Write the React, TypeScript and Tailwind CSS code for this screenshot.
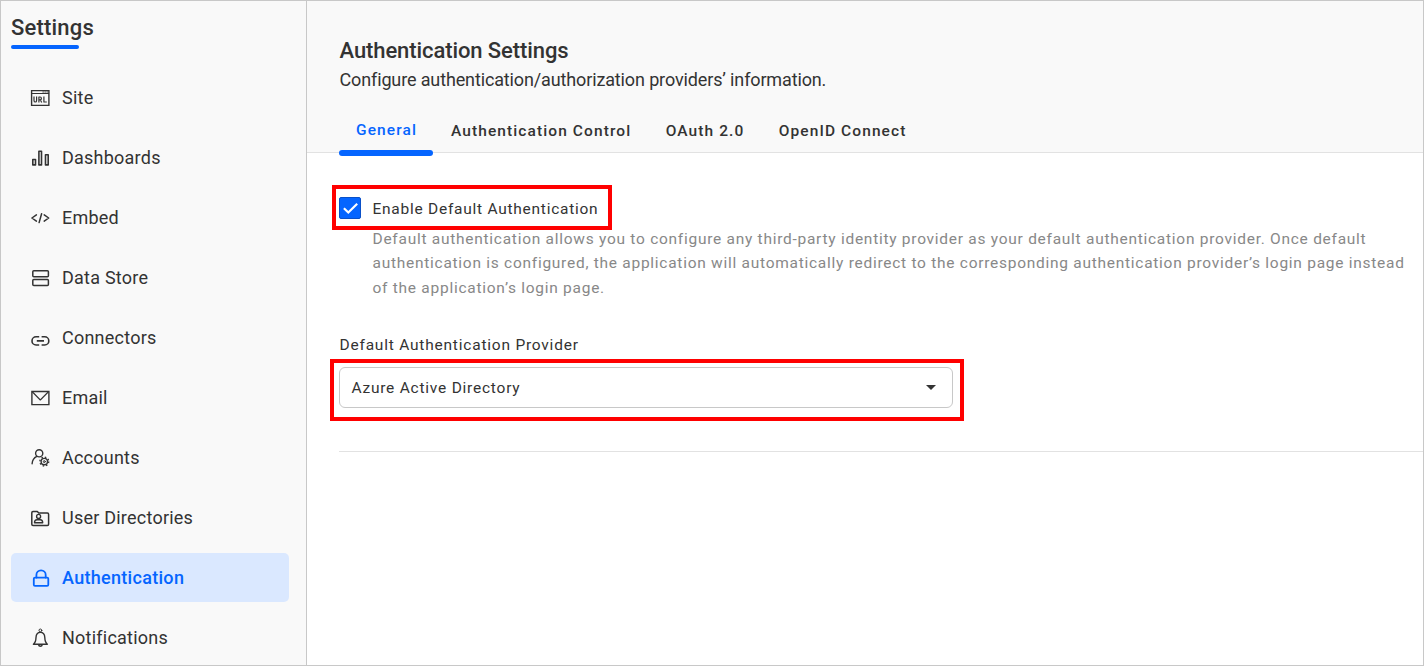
import React from "react";

type IconProps = { children: React.ReactNode };

const Icon = ({ children }: IconProps) => (
  <svg
    className="mt-px h-5 w-5 shrink-0"
    viewBox="0 0 20 20"
    fill="none"
    stroke="currentColor"
    strokeWidth="1.4"
    strokeLinecap="round"
    strokeLinejoin="round"
  >
    {children}
  </svg>
);

const items: { label: string; icon: React.ReactNode; active?: boolean }[] = [
  {
    label: "Site",
    icon: (
      <Icon>
        <path strokeLinejoin="miter" d="M1.6 2.6h17.3v14.8H1.6z" />
        <path strokeWidth="1" strokeLinecap="butt" d="M1.6 5.5h17.5" />
        <path strokeWidth="1.4" strokeLinecap="butt" d="M12.5 4h1.3M14.5 4h1.3M16.5 4h1.3" opacity=".7" />
        <path
          strokeWidth="1.2"
          strokeLinecap="butt"
          d="M4 8.4v4q0 1.6 1.3 1.6t1.3-1.6v-4M8.9 14.6V9h1.2q1.3 0 1.3 1.4t-1.3 1.4H9M10.3 11.8l1.4 2.7M13.9 8.4V14h2.9"
        />
      </Icon>
    ),
  },
  {
    label: "Dashboards",
    icon: (
      <Icon>
        <path strokeWidth="1.6" d="M2.8 11.5h2.7v5.4H2.8zM8.9 3.2h2.6v13.7H8.9zM15.5 6.8h2.7v10.1h-2.7z" />
      </Icon>
    ),
  },
  {
    label: "Embed",
    icon: (
      <Icon>
        <path strokeWidth="1.5" d="M6.4 6.9L1.9 10l4.5 3.1M14.2 6.9l4.5 3.1-4.5 3.1M11.6 5.8L9.1 14.6" />
      </Icon>
    ),
  },
  {
    label: "Data Store",
    icon: (
      <Icon>
        <rect strokeWidth="1.5" x="2.8" y="2.7" width="15.6" height="6" rx="1" />
        <rect strokeWidth="1.5" x="2.8" y="11.6" width="15.6" height="6" rx="1" />
      </Icon>
    ),
  },
  {
    label: "Connectors",
    icon: (
      <Icon>
        <path
          strokeWidth="1.6"
          strokeLinecap="butt"
          d="M9.2 8.8H6.1a4.1 4.1 0 0 0 0 8.2h3.1M11.6 8.8h3.1a4.1 4.1 0 0 1 0 8.2h-3.1M6.8 12.9h7.2"
        />
      </Icon>
    ),
  },
  {
    label: "Email",
    icon: (
      <Icon>
        <path strokeLinejoin="miter" d="M1.9 3.5h17v13.1h-17z" />
        <path strokeWidth="1.1" d="M2.5 4l7.8 8L18.2 4" />
      </Icon>
    ),
  },
  {
    label: "Accounts",
    icon: (
      <Icon>
        <circle cx="9.2" cy="5.3" r="3.6" />
        <path d="M2.1 15.8c.2-3.7 1.8-6.1 4.7-7.5" />
        <circle cx="14.3" cy="13.6" r="3.2" strokeWidth="1.4" />
        <circle cx="14.3" cy="13.6" r="1" strokeWidth="1" />
        <circle
          cx="14.3"
          cy="13.6"
          r="4.4"
          strokeWidth="1.4"
          strokeLinecap="butt"
          strokeDasharray="1.5 1.96"
        />
      </Icon>
    ),
  },
  {
    label: "User Directories",
    icon: (
      <Icon>
        <path strokeWidth="1.5" d="M3 3.5h4.3l1.5 1.6h8.6q1.2 0 1.2 1.2v10q0 1.2-1.2 1.2H3q-1.2 0-1.2-1.2V4.7q0-1.2 1.2-1.2z" />
        <circle cx="8.6" cy="8.4" r="2" />
        <path d="M4.5 14.8c0-2.3 1.2-3.1 2.5-3.1h3.2c1.3 0 2.5.8 2.5 3.1z" />
      </Icon>
    ),
  },
  {
    label: "Authentication",
    active: true,
    icon: (
      <Icon>
        <rect strokeWidth="1.8" x="3.8" y="9.6" width="14.5" height="8.3" rx="1.2" />
        <path strokeWidth="1.8" d="M6.4 9.6V7a4.65 4.65 0 0 1 9.3 0v2.6" />
      </Icon>
    ),
  },
  {
    label: "Notifications",
    icon: (
      <Icon>
        <circle cx="10.4" cy="2.4" r="1.4" strokeWidth="1" />
        <path d="M3.4 16.2c2-1.4 2.5-3.2 2.6-6.6.1-3.2 1.8-5.2 4.4-5.2s4.3 2 4.4 5.2c.1 3.4.6 5.2 2.6 6.6z" />
        <path strokeWidth="1.6" d="M8.7 16.8c.3 1.9 3.1 1.9 3.4 0" />
      </Icon>
    ),
  },
];

const tabs = ["Authentication Control", "OAuth 2.0", "OpenID Connect"];

export default function App() {
  return (
    <div className="flex h-[666px] w-[1424px] overflow-hidden border border-[#c8c8c8] bg-white font-['Roboto',sans-serif] text-[#333333]">
      <aside className="w-[306px] shrink-0 border-r border-[#c8c8c8] bg-[#f9f9f9] pl-[10px] pr-[17px]">
        <h1 className="mt-[12px] h-8 text-[22px] font-medium leading-[29px] tracking-[0.2px]">Settings</h1>
        <div className="h-1 w-[68px] rounded-[2px] bg-[#0565ff]" />
        <nav className="mt-[24px] flex flex-col gap-[11px]">
          {items.map((it) => (
            <a
              key={it.label}
              className={
                it.active
                  ? "flex h-[49px] items-center gap-3 rounded-[5px] bg-[#dae8ff] pl-[19px] text-[18px] font-medium tracking-[0.3px] text-[#0565ff]"
                  : "flex h-[49px] items-center gap-3 pl-[19px] text-[18px] tracking-[0.23px]"
              }
            >
              {it.icon}
              <span>{it.label}</span>
            </a>
          ))}
        </nav>
      </aside>

      <main className="min-w-0 flex-1">
        <header className="h-[152px] border-b border-[#e2e2e2] bg-[#f9f9f9] pl-8 pt-[35px]">
          <h2 className="pl-[0.5px] text-[22px] font-medium leading-[30px] tracking-[-0.09px]">Authentication Settings</h2>
          <p className="pl-[0.5px] text-[18px] leading-7 tracking-[-0.133px]">
            Configure authentication/authorization providers’ information.
          </p>
          <div className="mt-4 flex h-[46px] text-[15.49px] font-medium tracking-[1.1px]">
            <div className="flex h-[46px] w-[94px] shrink-0 flex-col justify-between text-[#0565ff]">
              <span className="pl-[17px] pt-2 leading-6">General</span>
              <span className="h-[6px] rounded-[3px] bg-[#0565ff]" />
            </div>
            <div className="flex gap-[34.4px] pl-[18px] pt-[9px] leading-6">
              {tabs.map((t) => (
                <span key={t}>{t}</span>
              ))}
            </div>
          </div>
        </header>

        <section className="pt-8">
          <div className="ml-[25px] flex h-[45px] w-[280px] items-center border-4 border-[#ff0000] pl-[3px]">
            <span className="flex h-[22px] w-[22px] shrink-0 items-center justify-center rounded-[2px] border border-[#0a50c8] bg-[#0565ff]">
              <svg className="h-5 w-5" viewBox="0 0 20 20" fill="none" stroke="white" strokeWidth="2.2">
                <path d="M3.9 10.2l4.4 4.3 8.9-8.8" />
              </svg>
            </span>
            <span className="whitespace-nowrap pl-[11.5px] pt-[3px] text-[15.49px] leading-6 tracking-[0.75px]">Enable Default Authentication</span>
          </div>
          <p className="-mt-[3px] ml-[65.5px] h-[73px] whitespace-nowrap text-[15.49px] leading-[24.3px] tracking-[0.737px] text-[#888888]">
            Default authentication allows you to configure any third-party identity provider as your default authentication provider. Once default
            <br />
            authentication is configured, the application will automatically redirect to the corresponding authentication provider’s login page instead
            <br />
            of the application’s login page.
          </p>
          <label className="ml-[32.5px] mt-[33px] block text-[15.49px] leading-6 tracking-[0.79px]">Default Authentication Provider</label>
          <div className="ml-[23px] mt-[2px] h-[62px] w-[634px] border-4 border-[#ff0000] pl-[5px] pt-1">
            <div className="flex h-[41px] w-[614px] items-center justify-between rounded-[6px] border border-[#c8c8c8] pl-[11.5px] pr-4 text-[15.49px] tracking-[0.775px]">
              <span className="pt-[2px]">Azure Active Directory</span>
              <svg className="h-[5px] w-[10px]" viewBox="0 0 10 5" fill="#333333">
                <path d="M0 0h10L5 5z" />
              </svg>
            </div>
          </div>
          <div className="ml-8 mt-[30px] h-px bg-[#e2e2e2]" />
        </section>
      </main>
    </div>
  );
}
